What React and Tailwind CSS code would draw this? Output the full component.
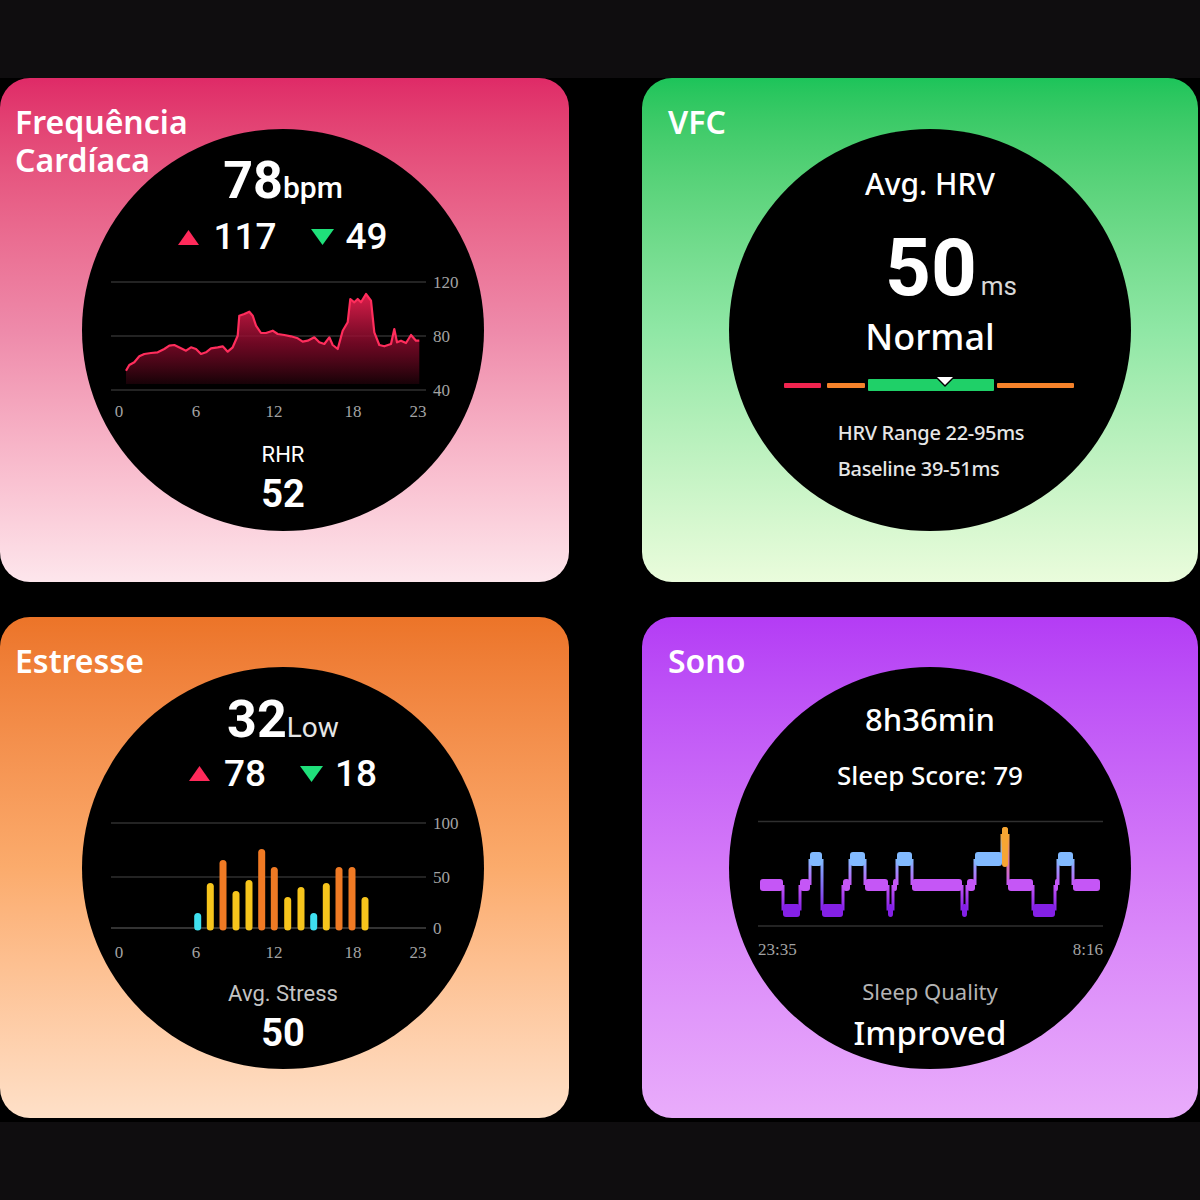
import React from "react";

const hrRaw = [[135,335],[145,318],[160,310],[175,292],[190,285],[210,282],[230,280],[250,270],[265,260],[280,258],[300,268],[315,275],[330,265],[345,270],[360,285],[375,280],[390,268],[410,265],[425,262],[440,278],[455,265],[470,230],[475,170],[490,165],[505,158],[515,170],[525,200],[540,222],[555,222],[575,215],[590,225],[610,228],[630,232],[650,238],[665,248],[680,245],[700,235],[715,250],[730,255],[745,235],[755,258],[770,270],[785,215],[800,190],[808,120],[820,130],[830,120],[840,130],[855,105],[870,125],[880,220],[895,258],[910,262],[930,255],[940,210],[948,250],[960,245],[975,252],[990,228],[1005,245],[1015,245]];
const hrPts = hrRaw.map(([x, y]) => [x / 3 - 17, y / 3 - 10]);
const hrLine = hrPts.map(([x, y], i) => `${i ? "L" : "M"}${x.toFixed(1)} ${y.toFixed(1)}`).join(" ");
const hrArea = `${hrLine} L${hrPts[hrPts.length - 1][0].toFixed(1)} 115 L${hrPts[0][0].toFixed(1)} 115 Z`;

const stressBars = [
  [196.7, 913, "#3fe0ef"], [209.3, 883, "#f7c51c"], [222, 860, "#f07a24"], [235, 891, "#f7c51c"],
  [248, 880, "#f7c51c"], [260.7, 849, "#f07a24"], [273.3, 867, "#f07a24"], [286.7, 897, "#f7c51c"],
  [300, 887, "#f7c51c"], [312.7, 913, "#3fe0ef"], [325.3, 883, "#f7c51c"], [338, 867, "#f07a24"],
  [351, 867, "#f07a24"], [364, 897, "#f7c51c"],
];

const LV = {
  A: { y: 18, h: 14, c: "#f6a533" },
  R: { y: 43, h: 14, c: "#82baff" },
  L: { y: 70, h: 12, c: "#c556f6" },
  D: { y: 95, h: 13, c: "#8420e6" },
};
const sleepSegs = [
  [760, 783, "L"], [783, 800, "D"], [800, 810, "L"], [810, 822, "R"], [822, 843, "D"], [843, 850, "L"],
  [850, 865, "R"], [865, 888, "L"], [888, 893, "D"], [893, 897, "L"], [897, 912, "R"], [912, 962, "L"],
  [962, 967, "D"], [967, 975, "L"], [975, 1002, "R"], [1002, 1008, "A"], [1008, 1033, "L"],
  [1033, 1055, "D"], [1055, 1058, "L"], [1058, 1073, "R"], [1073, 1100, "L"],
];

function Tri({ up }) {
  return up ? (
    <svg width="21" height="15" viewBox="0 0 21 15"><polygon points="10.5,0 21,15 0,15" fill="#ff2a5a" /></svg>
  ) : (
    <svg width="23" height="16" viewBox="0 0 23 16"><polygon points="0,0 23,0 11.5,16" fill="#1fe07a" /></svg>
  );
}

function MinMax({ hi, lo, top }) {
  return (
    <div className={`flex h-[40px] items-center text-[37px] leading-[40px] font-medium text-white [font-family:Roboto,sans-serif] ${top}`}>
      <Tri up />
      <span className="ml-[14px]">{hi}</span>
      <span className="ml-[34px] flex items-center"><Tri /></span>
      <span className="ml-[12px]">{lo}</span>
    </div>
  );
}

function AxisLabels({ ys, xs }) {
  return (
    <g fill="#a3a3a3" fontSize="17" fontFamily="'Liberation Serif', serif">
      {ys.map(([t, y]) => (
        <text key={t} x="335" y={y}>{t}</text>
      ))}
      {xs.map(([t, x]) => (
        <text key={t} x={x} y="148" textAnchor="middle">{t}</text>
      ))}
    </g>
  );
}

function Card({ title, bg, right, children }) {
  return (
    <div className={`relative flex items-center justify-center rounded-[30px] ${bg}`}>
      <div
        className={`absolute top-[25px] text-[32px] leading-[38px] font-semibold text-white [font-family:'Noto_Sans',sans-serif] ${right ? "left-[26px]" : "left-[15px]"}`}
      >
        {title}
      </div>
      <div
        className={`flex h-[402px] w-[402px] flex-col items-center rounded-full bg-black text-white ${right ? "ml-[20px]" : "mr-[3px]"}`}
      >
        {children}
      </div>
    </div>
  );
}

function HeartCircle() {
  return (
    <>
      <div className="mt-[24px] flex h-[56px] items-baseline [font-family:Roboto,sans-serif]">
        <span className="text-[52px] leading-[56px] font-bold">78</span>
        <span className="text-[30px] leading-[30px] font-medium">bpm</span>
      </div>
      <MinMax hi="117" lo="49" top="mt-[8px]" />
      <svg className="mt-[12px]" width="370" height="160" viewBox="0 0 370 160">
        <defs>
          <linearGradient id="hrg" x1="0" y1="0" x2="0" y2="1">
            <stop offset="0" stopColor="#e8204f" stopOpacity="0.95" />
            <stop offset="0.55" stopColor="#8a0a2c" stopOpacity="0.8" />
            <stop offset="1" stopColor="#1a0208" stopOpacity="0.9" />
          </linearGradient>
        </defs>
        <g stroke="#2f2f2f" strokeWidth="1.5">
          <line x1="13" y1="13" x2="328" y2="13" />
          <line x1="13" y1="67" x2="328" y2="67" />
          <line x1="13" y1="121" x2="328" y2="121" />
        </g>
        <path d={hrArea} fill="url(#hrg)" />
        <path d={hrLine} fill="none" stroke="#ff2d5c" strokeWidth="2.2" strokeLinejoin="round" />
        <AxisLabels ys={[["120", 19], ["80", 73], ["40", 127]]} xs={[["0", 21], ["6", 98], ["12", 176], ["18", 255], ["23", 320]]} />
      </svg>
      <div className="mt-[12px] text-[22px] leading-[28px] [font-family:Roboto,sans-serif]">RHR</div>
      <div className="mt-[3px] text-[38px] leading-[44px] font-bold [font-family:Roboto,sans-serif]">52</div>
    </>
  );
}

function HrvCircle() {
  return (
    <>
      <div className="pt-[37px] text-[30px] leading-[36px] font-medium [font-family:'Noto_Sans',sans-serif]">Avg. HRV</div>
      <div className="ml-[42px] mt-[26px] flex h-[80px] items-baseline [font-family:Roboto,sans-serif]">
        <span className="text-[80px] leading-[80px] font-bold">50</span>
        <span className="ml-[4px] text-[26px] leading-[26px] text-[#d8d8d8]">ms</span>
      </div>
      <div className="mt-[8px] text-[36px] leading-[42px] font-medium [font-family:'Noto_Sans',sans-serif]">Normal</div>
      <svg className="mt-[17px]" width="292" height="20" viewBox="0 0 292 20">
        <rect x="0" y="8" width="37" height="5" rx="1" fill="#f0244f" />
        <rect x="43" y="8" width="38" height="5" rx="1" fill="#f5822a" />
        <rect x="84" y="4" width="126" height="12" rx="1" fill="#1fd068" />
        <rect x="213" y="8" width="77" height="5" rx="1" fill="#f5822a" />
        <polygon points="150,1 172,1 161,12" fill="#000" />
        <polygon points="153,2 169,2 161,10" fill="#fff" />
      </svg>
      <div className="mt-[25px] flex flex-col items-start pl-[2px] text-[20px] font-medium tracking-[-0.3px] text-[#e6e6e6] [font-family:'Noto_Sans',sans-serif]">
        <div className="leading-[26px]">HRV Range 22-95ms</div>
        <div className="mt-[10px] leading-[26px]">Baseline 39-51ms</div>
      </div>
    </>
  );
}

function StressCircle() {
  return (
    <>
      <div className="mt-[25px] flex h-[56px] items-baseline [font-family:Roboto,sans-serif]">
        <span className="text-[52px] leading-[56px] font-bold">32</span>
        <span className="text-[28px] leading-[28px] text-[#e6e6e6]">Low</span>
      </div>
      <MinMax hi="78" lo="18" top="mt-[6px]" />
      <svg className="mt-[16px]" width="370" height="160" viewBox="0 0 370 160">
        <g stroke="#2f2f2f" strokeWidth="1.5">
          <line x1="13" y1="13" x2="328" y2="13" />
          <line x1="13" y1="67" x2="328" y2="67" />
          <line x1="13" y1="118" x2="328" y2="118" stroke="#444" />
        </g>
        {stressBars.map(([x, top, c], i) => (
          <rect key={i} x={x - 97 - 3.5} y={top - 810} width="7" height={117 - (top - 810) + 3.5} rx="3.5" fill={c} />
        ))}
        <AxisLabels ys={[["100", 19], ["50", 73], ["0", 124]]} xs={[["0", 21], ["6", 98], ["12", 176], ["18", 255], ["23", 320]]} />
      </svg>
      <div className="mt-[10px] text-[22px] leading-[28px] text-[#c4c4c4] [font-family:Roboto,sans-serif]">Avg. Stress</div>
      <div className="mt-[3px] text-[38px] leading-[44px] font-bold [font-family:Roboto,sans-serif]">50</div>
    </>
  );
}

function SleepCircle() {
  const ox = 745;
  const conns = [];
  for (let i = 1; i < sleepSegs.length; i++) {
    const a = LV[sleepSegs[i - 1][2]];
    const b = LV[sleepSegs[i][2]];
    const x = sleepSegs[i][0] - ox;
    const upper = a.y < b.y ? a : b;
    const lower = a.y < b.y ? b : a;
    conns.push({ x, y1: upper.y + upper.h / 2, y2: lower.y + lower.h / 2, c1: upper.c, c2: lower.c, i });
  }
  return (
    <>
      <div className="pt-[33px] text-[31px] leading-[38px] font-medium [font-family:'Noto_Sans',sans-serif]">8h36min</div>
      <div className="mt-[21px] text-[26px] leading-[32px] font-medium [font-family:'Noto_Sans',sans-serif]">Sleep Score: 79</div>
      <svg className="mt-[18px]" width="370" height="160" viewBox="0 0 370 160">
        <defs>
          {conns.map((k) => (
            <linearGradient key={k.i} id={`sc${k.i}`} x1="0" y1="0" x2="0" y2="1">
              <stop offset="0" stopColor={k.c1} />
              <stop offset="1" stopColor={k.c2} />
            </linearGradient>
          ))}
        </defs>
        <g stroke="#2f2f2f" strokeWidth="1.5">
          <line x1="13" y1="12.5" x2="358" y2="12.5" />
          <line x1="13" y1="117" x2="358" y2="117" />
        </g>
        {conns.map((k) => (
          <rect key={k.i} x={k.x - 1.5} y={k.y1} width="3" height={k.y2 - k.y1} fill={`url(#sc${k.i})`} />
        ))}
        {sleepSegs.map(([a, b, l], i) => (
          <rect key={i} x={a - ox} y={LV[l].y} width={b - a} height={LV[l].h} rx="3" fill={LV[l].c} />
        ))}
        <rect x={1002 - ox} y="18" width="6" height="40" rx="3" fill="#f6a533" />
        <g fill="#a3a3a3" fontSize="17" fontFamily="'Liberation Serif', serif">
          <text x="13" y="146">23:35</text>
          <text x="358" y="146" textAnchor="end">8:16</text>
        </g>
      </svg>
      <div className="mt-[8px] text-[22px] leading-[28px] text-[#b4b4b4] [font-family:'Noto_Sans',sans-serif]">Sleep Quality</div>
      <div className="mt-[8px] text-[33px] leading-[40px] font-medium [font-family:'Noto_Sans',sans-serif]">Improved</div>
    </>
  );
}

export default function App() {
  return (
    <div className="flex h-[1200px] w-[1200px] flex-col bg-black">
      <div className="h-[78px] bg-[#0f0d0f]" />
      <div className="grid h-[1044px] grid-cols-[569px_556px] grid-rows-[504px_501px] gap-x-[73px] gap-y-[35px] bg-black">
        <Card title={<>Frequência<br />Cardíaca</>} bg="bg-linear-to-b from-[#df2a67] via-[#ee8aaa] to-[#fde6ec]">
          <HeartCircle />
        </Card>
        <Card right title="VFC" bg="bg-linear-to-b from-[#1cc45a] via-[#8fe7a5] to-[#eafcdc]">
          <HrvCircle />
        </Card>
        <Card title="Estresse" bg="bg-linear-to-b from-[#ec7428] via-[#fbab6c] to-[#fee0c8]">
          <StressCircle />
        </Card>
        <Card right title="Sono" bg="bg-linear-to-b from-[#b43cf5] via-[#d479f8] to-[#e9acfb]">
          <SleepCircle />
        </Card>
      </div>
      <div className="h-[78px] bg-[#0f0d0f]" />
    </div>
  );
}
